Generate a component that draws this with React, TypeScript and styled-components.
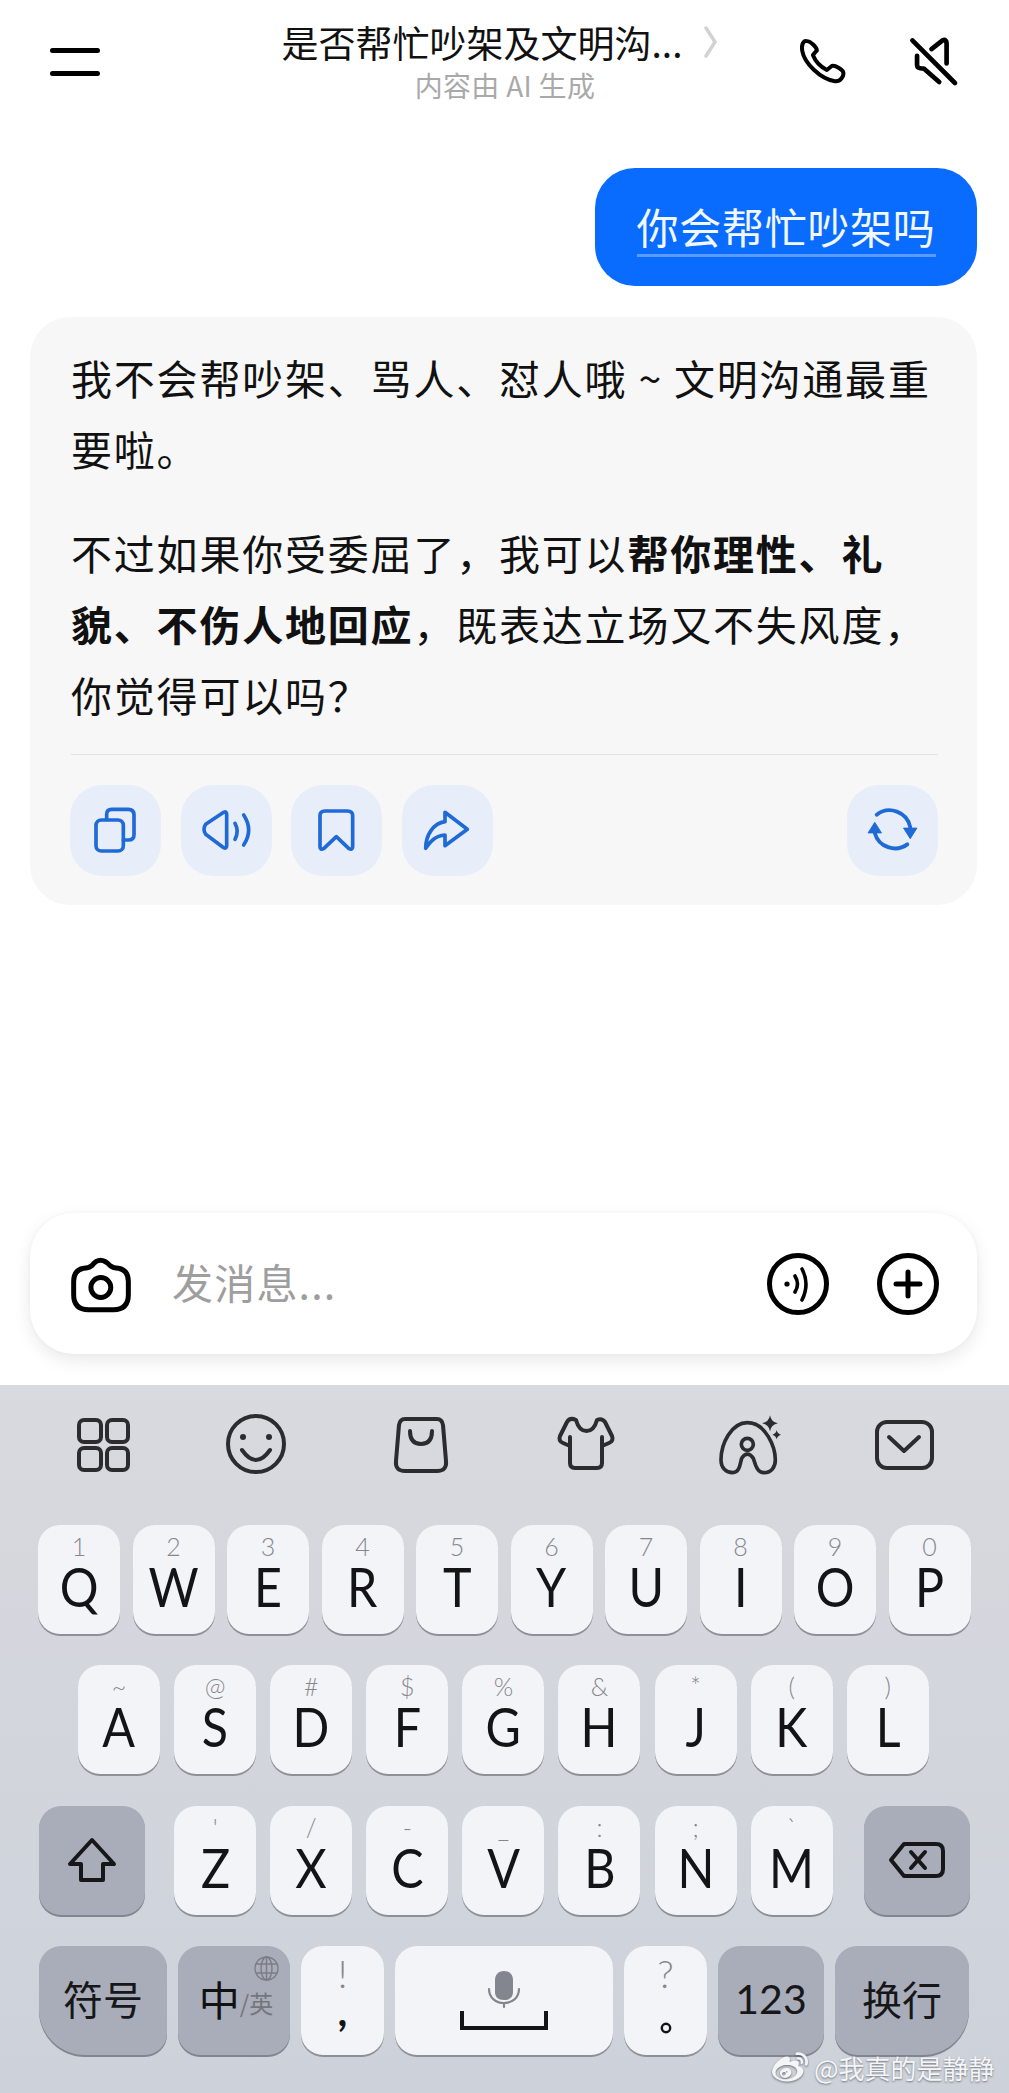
import React from "react";
import styled, { createGlobalStyle } from "styled-components";
import { FaWeibo } from "react-icons/fa";

const Global = createGlobalStyle`
  html, body { margin: 0; padding: 0; background: #fff; }
  body { font-family: "Noto Sans CJK SC", "Noto Sans", sans-serif; color: #111; }
  * { box-sizing: border-box; }
`;

const Page = styled.div`
  position: relative;
  width: 1009px;
  height: 2093px;
  overflow: hidden;
  display: flex;
  flex-direction: column;
  background: #fff;
`;

const Header = styled.header`
  height: 168px;
  padding: 17px 49px 0 50px;
  display: grid;
  grid-template-columns: 1fr auto 1fr;
  align-items: start;
`;
const MenuIcon = styled.svg`
  width: 50px;
  height: 28px;
  margin-top: 31px;
  display: block;
`;
const TitleBlock = styled.div`
  display: flex;
  flex-direction: column;
  align-items: center;
`;
const TitleRow = styled.div`
  display: flex;
  align-items: center;
  gap: 22px;
  margin-right: 10px;
`;
const Title = styled.div`
  font-size: 37px;
  line-height: 50px;
  color: #111;
  white-space: nowrap;
`;
const Sub = styled.div`
  font-size: 28px;
  line-height: 36px;
  letter-spacing: 0.3px;
  color: #a9a9a9;
  white-space: nowrap;
`;
const HeaderActions = styled.div`
  display: flex;
  justify-content: flex-end;
  align-items: center;
  gap: 58px;
  margin-top: 18px;
`;

const Main = styled.main`
  flex: 1;
  padding: 0 32px 0 30px;
  display: flex;
  flex-direction: column;
  align-items: stretch;
`;
const UserBubble = styled.div`
  align-self: flex-end;
  height: 118px;
  padding: 0 41.5px 0 42px;
  border-radius: 40px;
  background: #0a6cff;
  color: #f2f8ff;
  display: flex;
  align-items: center;
`;
const UserText = styled.span`
  font-size: 42px;
  line-height: 56px;
  letter-spacing: 0.7px;
  border-bottom: 3px solid #5a9bff;
`;
const AnswerCard = styled.section`
  margin-top: 31px;
  padding: 25px 39px 29px 41px;
  border-radius: 40px;
  background: #f7f7f7;
`;
const Para = styled.p`
  margin: 0 0 33px;
  font-size: 41px;
  line-height: 71px;
  color: #111;
  white-space: nowrap;
  letter-spacing: 1.8px;
  &:last-of-type { margin-bottom: 0; }
  strong { font-weight: 700; }
`;
const Divider = styled.hr`
  border: 0;
  height: 1px;
  background: #e3e3e3;
  margin: 24px 0 30px;
`;
const ActionRow = styled.div`
  display: flex;
  gap: 19.5px;
  margin-left: -1px;
`;
const ActionButton = styled.div<{ $push?: boolean }>`
  width: 91px;
  height: 91px;
  border-radius: 32px;
  background: #e8eef9;
  margin-left: ${(p) => (p.$push ? "auto" : "0")};
  svg { display: block; width: 91px; height: 91px; }
`;

const InputBar = styled.div`
  height: 141px;
  margin: 0 32px 31px 30px;
  padding: 0 38px 0 40px;
  border-radius: 44px;
  background: #fff;
  box-shadow: 0 6px 18px rgba(0, 0, 0, 0.09), 0 0 4px rgba(0, 0, 0, 0.03);
  display: flex;
  align-items: center;
`;
const Placeholder = styled.div`
  flex: 1;
  margin: 0 0 5px 40px;
  font-size: 41px;
  letter-spacing: 1.2px;
  color: #9e9e9e;
  line-height: 60px;
`;
const InputActions = styled.div`
  display: flex;
  gap: 48px;
`;

const Keyboard = styled.div`
  height: 708px;
  background: linear-gradient(#d9dadf 0%, #d5d7dd 25%, #cdd2da 100%);
`;
const Toolbar = styled.div`
  display: grid;
  grid-template-columns: 153px 165px 165px 164px 154px 64px;
  padding: 28px 0 0 71px;
  height: 140px;
  align-items: start;
  svg { display: block; }
`;
const KeyRows = styled.div`
  display: flex;
  flex-direction: column;
  gap: 31.33px;
`;
const Row = styled.div<{ $left: number; $gap: number }>`
  display: flex;
  padding-left: ${(p) => p.$left}px;
  gap: ${(p) => p.$gap}px;
`;
const Key = styled.div<{ $w: number; $dark?: boolean; $corner?: "left" | "right"; $after?: number; $before?: number }>`
  position: relative;
  flex: none;
  width: ${(p) => p.$w}px;
  height: 109px;
  margin-right: ${(p) => p.$after ?? 0}px;
  margin-left: ${(p) => p.$before ?? 0}px;
  background: ${(p) => (p.$dark ? "#a9adb9" : "#f3f4f8")};
  border-radius: ${(p) =>
    p.$corner === "left"
      ? "22px 22px 22px 46px"
      : p.$corner === "right"
        ? "22px 22px 46px 22px"
        : "22px"};
  box-shadow: 0 2px 0 ${(p) => (p.$dark ? "#82858f" : "#8d9099")};
  display: flex;
  flex-direction: column;
  align-items: center;
  color: #141416;
  padding-top: 7px;
`;
const CenterKey = styled(Key)`
  justify-content: center;
  padding-top: 0;
`;
const Hint = styled.span`
  font-family: Lato, sans-serif;
  font-weight: 300;
  font-size: 25px;
  line-height: 28px;
  height: 28px;
  color: #85878c;
`;
const Letter = styled.span`
  font-family: Lato, sans-serif;
  font-weight: 400;
  font-size: 55px;
  line-height: 52px;
  transform: scaleX(0.88);
`;
const FuncLabel = styled.span`
  font-size: 40px;
  line-height: 50px;
  margin-bottom: 4px;
  color: #17171a;
`;
const NumLabel = styled.span`
  font-family: Lato, sans-serif;
  font-size: 41px;
  line-height: 50px;
  margin-bottom: 2px;
  color: #17171a;
`;
const LangRow = styled.div`
  display: flex;
  align-items: flex-end;
  margin: 0 0 4px 4px;
`;
const LangMain = styled.span`
  font-size: 41px;
  line-height: 50px;
  color: #111;
`;
const LangSub = styled.span`
  font-size: 24px;
  line-height: 40px;
  color: #74767d;
`;
const GlobeBadge = styled.svg`
  position: absolute;
  top: 10px;
  right: 11px;
  width: 25px;
  height: 25px;
`;
const PunctHint = styled.span`
  font-family: Lato, sans-serif;
  font-weight: 300;
  font-size: 38px;
  line-height: 40px;
  height: 40px;
  color: #85878c;
`;
const PunctMain = styled.span`
  font-family: Lato, sans-serif;
  font-weight: 700;
  font-size: 42px;
  line-height: 50px;
  margin-top: -8px;
  color: #141416;
`;
const PeriodMark = styled.svg`
  width: 12px;
  height: 12px;
  margin-top: 29px;
`;
const SpaceIcon = styled.svg`
  width: 90px;
  height: 62px;
  margin-top: 16px;
`;

const Watermark = styled.div`
  position: absolute;
  left: 772px;
  top: 2050px;
  display: flex;
  align-items: center;
  gap: 6px;
  font-size: 26px;
  line-height: 36px;
  color: #f4f5f7;
  white-space: nowrap;
  text-shadow: 0 1px 2px rgba(40, 40, 50, 0.55);
  svg { filter: drop-shadow(0 1px 1px rgba(40, 40, 50, 0.6)); }
`;

const rowOne = [["1","Q"],["2","W"],["3","E"],["4","R"],["5","T"],["6","Y"],["7","U"],["8","I"],["9","O"],["0","P"]];
const rowTwo = [["~","A"],["@","S"],["#","D"],["$","F"],["%","G"],["&","H"],["*","J"],["(","K"],[")","L"]];
const rowThree = [["'","Z"],["/","X"],["-","C"],["_","V"],[":","B"],[";","N"],["`","M"]];

const Blue = { fill: "none", stroke: "#1f6ad6", strokeWidth: 11, strokeLinecap: "round", strokeLinejoin: "round" } as const;
const Ink = { fill: "none", stroke: "#2b2b30", strokeWidth: 4, strokeLinecap: "round", strokeLinejoin: "round" } as const;
const Black = { fill: "none", stroke: "#000", strokeLinecap: "round", strokeLinejoin: "round" } as const;

export default function App() {
  return (
    <Page>
      <Global />
      <Header>
        <MenuIcon viewBox="0 0 50 28">
          <path d="M2.5 2.5H47.5M2.5 25.5H47.5" stroke="#000" strokeWidth="5" strokeLinecap="round" />
        </MenuIcon>
        <TitleBlock>
          <TitleRow>
            <Title>是否帮忙吵架及文明沟...</Title>
            <svg width="14" height="32" viewBox="0 0 14 32">
              <path d="M2 2L11 16L2 30" fill="none" stroke="#d2d2d2" strokeWidth="3.5" strokeLinecap="round" strokeLinejoin="round" />
            </svg>
          </TitleRow>
          <Sub>内容由 AI 生成</Sub>
        </TitleBlock>
        <HeaderActions>
          <svg width="53" height="50" viewBox="50 50 160 150">
            <path {...Black} strokeWidth="12" d="M80 65C70 62 62 75 66 95C72 130 120 180 165 186C180 188 192 172 190 160C188 150 165 137 155 140L140 152C120 142 105 125 98 107L110 93C110 85 92 65 80 65Z" />
          </svg>
          <svg width="52" height="52" viewBox="385 50 155 155">
            <path {...Black} strokeWidth="14" d="M398 66L525 193M455 92L488 66C496 62 500 68 500 76V135M412 112V140C412 148 420 150 432 150L478 190" />
          </svg>
        </HeaderActions>
      </Header>

      <Main>
        <UserBubble>
          <UserText>你会帮忙吵架吗</UserText>
        </UserBubble>
        <AnswerCard>
          <Para>我不会帮吵架、骂人、怼人哦 ~ 文明沟通最重<br />要啦。</Para>
          <Para>
            不过如果你受委屈了，我可以<strong>帮你理性、礼</strong><br />
            <strong>貌、不伤人地回应</strong>，既表达立场又不失风度，<br />
            你觉得可以吗？
          </Para>
          <Divider />
          <ActionRow>
            <ActionButton>
              <svg viewBox="30 15 273 273">
                <rect {...Blue} x="108" y="120" width="82" height="93" rx="16" />
                <path {...Blue} d="M140 118V103Q140 88 155 88H205Q222 88 222 105V165Q222 180 205 180H190" />
              </svg>
            </ActionButton>
            <ActionButton>
              <svg viewBox="360 15 273 273">
                <path {...Blue} d="M488 97L434 133Q424 148 434 163L488 203Q497 207 497 197V103Q497 93 488 97Z" />
                <path {...Blue} d="M522 130Q535 153 522 178M548 105Q578 150 548 195" />
              </svg>
            </ActionButton>
            <ActionButton>
              <svg viewBox="693 15 273 273">
                <path {...Blue} d="M780 107Q780 93 795 93H862Q878 93 878 107V200Q878 212 866 205L829 170L792 205Q780 212 780 200Z" />
              </svg>
            </ActionButton>
            <ActionButton>
              <svg viewBox="1026 15 273 273">
                <path {...Blue} d="M1155 97L1222 148L1155 197V165C1125 168 1110 185 1097 205C1097 165 1120 130 1155 125Z" />
              </svg>
            </ActionButton>
            <ActionButton $push>
              <svg viewBox="-2 -2 95 95">
                <path d="M29 29A22 22 0 0 1 64 42M61 60A22 22 0 0 1 27 48" fill="none" stroke="#1f6ad6" strokeWidth="4" strokeLinecap="round" />
                <path d="M27 37L34 48H20ZM64 54L57 43H71Z" fill="#1f6ad6" stroke="#1f6ad6" strokeWidth="1" strokeLinejoin="round" />
              </svg>
            </ActionButton>
          </ActionRow>
        </AnswerCard>
      </Main>

      <InputBar>
        <svg width="62" height="58" viewBox="30 40 185 175">
          <path {...Black} strokeWidth="15" d="M95 72Q120 40 150 72Q160 80 175 80Q205 85 205 120V160Q205 205 160 205H85Q40 205 40 160V120Q40 85 70 80Q85 80 95 72Z" />
          <circle cx="122" cy="138" r="30" fill="none" stroke="#000" strokeWidth="15" />
        </svg>
        <Placeholder>发消息...</Placeholder>
        <InputActions>
          <svg width="62" height="62" viewBox="0 0 62 62">
            <circle cx="31" cy="31" r="28.5" fill="none" stroke="#000" strokeWidth="5" />
            <circle cx="20" cy="31" r="2.6" fill="#000" />
            <path {...Black} strokeWidth="3.6" d="M28 23Q33 31 28 39M35 16Q43 31 35 47" />
          </svg>
          <svg width="62" height="62" viewBox="0 0 62 62">
            <circle cx="31" cy="31" r="28.5" fill="none" stroke="#000" strokeWidth="5" />
            <path {...Black} strokeWidth="5" d="M31 19V43M19 31H43" />
          </svg>
        </InputActions>
      </InputBar>

      <Keyboard>
        <Toolbar>
          <svg width="64" height="64" viewBox="0 0 64 64">
            <rect {...Ink} x="8" y="7" width="22" height="22" rx="5" />
            <rect {...Ink} x="36" y="7" width="21" height="22" rx="5" />
            <rect {...Ink} x="8" y="35" width="22" height="22" rx="5" />
            <rect {...Ink} x="36" y="35" width="21" height="22" rx="5" />
          </svg>
          <svg width="64" height="64" viewBox="0 0 64 64">
            <circle {...Ink} cx="32" cy="31" r="28" />
            <circle cx="19" cy="24" r="3" fill="#2b2b30" />
            <circle cx="45" cy="24" r="3" fill="#2b2b30" />
            <path {...Ink} d="M18 37Q32 57 46 37" />
          </svg>
          <svg width="64" height="64" viewBox="0 0 64 64">
            <path {...Ink} d="M16 6H48Q53 6 54 12L57 48Q58 58 48 58H16Q6 58 7 48L10 12Q11 6 16 6Z" />
            <path {...Ink} d="M21 18Q21 31 32 31Q43 31 43 18" />
          </svg>
          <svg width="64" height="64" viewBox="0 0 64 64">
            <path {...Ink} d="M22 7Q25 18 32.5 18Q40 18 43 7Q48 5 51 9L58 23Q60 28 55 30L48 33M22 7Q16 4 13 9L6 23Q4 28 9 30L16 33M16 24V50Q16 55 21 55H43Q48 55 48 50V24" />
          </svg>
          <svg width="64" height="64" viewBox="534 39 192 192">
            <path {...Ink} strokeWidth="11" d="M622 68C575 68 543 130 543 180C543 205 560 218 578 218C600 218 600 190 605 175Q622 150 640 175C645 190 650 218 672 218C695 218 706 200 706 180C706 160 700 135 685 110C670 85 650 68 622 68Z" />
            <circle {...Ink} strokeWidth="11" cx="622" cy="133" r="18" />
            <path d="M690 46Q693 66 714 70Q693 74 690 94Q687 74 666 70Q687 66 690 46ZM710 90Q712 101 723 104Q712 107 710 118Q708 107 697 104Q708 101 710 90Z" fill="#2b2b30" />
          </svg>
          <svg width="64" height="64" viewBox="0 0 64 64">
            <rect {...Ink} x="5" y="9" width="55" height="46" rx="10" />
            <path {...Ink} d="M17 24L32 38L47 24" />
          </svg>
        </Toolbar>

        <KeyRows>
          <Row $left={38} $gap={12.5}>
            {rowOne.map(([h, l]) => (
              <Key $w={82} key={l}><Hint>{h}</Hint><Letter>{l}</Letter></Key>
            ))}
          </Row>
          <Row $left={78} $gap={14.1}>
            {rowTwo.map(([h, l]) => (
              <Key $w={82} key={l}><Hint>{h}</Hint><Letter>{l}</Letter></Key>
            ))}
          </Row>
          <Row $left={39} $gap={14.1}>
            <CenterKey $w={106} $dark $after={15}>
              <svg width="50" height="46" viewBox="0 0 50 46">
                <path d="M25 3L47 27H36V43H14V27H3Z" fill="none" stroke="#17171a" strokeWidth="4" strokeLinejoin="round" />
              </svg>
            </CenterKey>
            {rowThree.map(([h, l]) => (
              <Key $w={82} key={l}><Hint>{h}</Hint><Letter>{l}</Letter></Key>
            ))}
            <CenterKey $w={106} $dark $before={17}>
              <svg width="58" height="38" viewBox="0 0 58 38">
                <path d="M16 3H48Q55 3 55 10V28Q55 35 48 35H16L3 19Z" fill="none" stroke="#17171a" strokeWidth="4" strokeLinejoin="round" />
                <path d="M23 11L37 27M37 11L23 27" stroke="#17171a" strokeWidth="4" strokeLinecap="round" />
              </svg>
            </CenterKey>
          </Row>
          <Row $left={39} $gap={11}>
            <CenterKey $w={128} $dark $corner="left"><FuncLabel>符号</FuncLabel></CenterKey>
            <CenterKey $w={112} $dark>
              <LangRow><LangMain>中</LangMain><LangSub>/英</LangSub></LangRow>
              <GlobeBadge viewBox="0 0 25 25">
                <g fill="none" stroke="#7b7d85" strokeWidth="1.4">
                  <circle cx="12.5" cy="12.5" r="11.5" />
                  <ellipse cx="12.5" cy="12.5" rx="5.5" ry="11.5" />
                  <path d="M12.5 1V24M2 8H23M2 17H23" />
                </g>
              </GlobeBadge>
            </CenterKey>
            <Key $w={83}><PunctHint>!</PunctHint><PunctMain>,</PunctMain></Key>
            <Key $w={218}>
              <SpaceIcon viewBox="0 0 90 62">
                <path d="M45 2C39 2 36 6 36 11V23C36 28 39 31 45 31C51 31 54 28 54 23V11C54 6 51 2 45 2Z" fill="#83858f" />
                <path d="M30 20C30 29 37 34 45 34C53 34 60 29 60 20M45 34V38" fill="none" stroke="#83858f" strokeWidth="2.2" strokeLinecap="round" />
                <path d="M3 42V59H87V42" fill="none" stroke="#141416" strokeWidth="4" />
              </SpaceIcon>
            </Key>
            <Key $w={83}>
              <PunctHint>?</PunctHint>
              <PeriodMark viewBox="0 0 12 12"><circle cx="6" cy="6" r="4.2" fill="none" stroke="#141416" strokeWidth="2.4" /></PeriodMark>
            </Key>
            <CenterKey $w={106} $dark><NumLabel>123</NumLabel></CenterKey>
            <CenterKey $w={134} $dark $corner="right"><FuncLabel>换行</FuncLabel></CenterKey>
          </Row>
        </KeyRows>
      </Keyboard>

      <Watermark>
        <FaWeibo size={36} />
        <span>@我真的是静静</span>
      </Watermark>
    </Page>
  );
}
